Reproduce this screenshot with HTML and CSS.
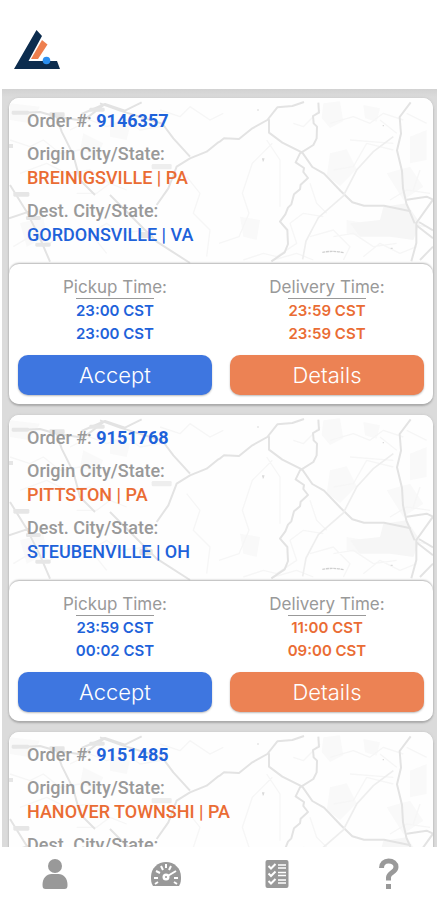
FILE: index.html
```html
<!DOCTYPE html>
<html lang="en">
<head>
<meta charset="utf-8">
<meta name="viewport" content="width=device-width, initial-scale=1">
<title>Available Orders</title>
<link rel="stylesheet" href="styles.css">
</head>
<body>
<svg class="defs" aria-hidden="true">
  <symbol id="map" viewBox="27 24 1272 498" preserveAspectRatio="xMidYMid slice">
    <g fill="#f9f9f9">
      <path d="M970 40l50-6 10 60-40 20-25-30zM990 190l50-12 30 60-50 50-40-30zM1160 250l70-20 40 60-60 40zM1040 390l60 10-10 40-50-10zM1230 140l50-20v90l-50 10zM1090 45l50 10-10 40-35-10zM720 380l60 10-10 60-40-10z"/>
      <path d="M30 40l90 10-30 50-60-10zM250 130l60 30-20 40-50-20zM60 400l70-20 10 60-60 30zM330 90l60 20-10 40-50-10z"/>
    </g>
    <path d="M1150 350l70-10 40 60-20 50-70-10-90 0-30-40 90-10z" fill="#f6f6f6"/>
    <g fill="none" stroke="#f6f6f6" stroke-width="4" stroke-linejoin="round">
      <path d="M30 150l60 20 40-20 50 40 60-10M60 250l80-30 60 30 70-10 60 40M40 470l50-30 60 20 50-40 80 20 40 50M210 120l60-30 50 20 60-20 40 30 60-10M380 300l-50-20-40 30-60 0M270 430l50-30 40 30 80-10"/>
      <path d="M480 60l60 20 30-30 60 40 40-20M560 260l40 50-20 60 50 50-10 80M657 460l60-20 30-70-20-60 30-90 60-60M800 150l40 60v140M730 510l60-20 40 10 60-40-20-60 40-30 60 10M820 510l70-20 50 20M930 280l20 60 30 30M960 60l-50 50-30-10M990 100l70-20 50 20 40-30 60 20M1000 240l60-10 40-70 80 20M1050 150l130 10M1140 90l50 40M1170 330l50-30 70 10M1000 440l60-10 60 40 70-10M1090 500l50-40 60 30 50-20M930 440l70-20 50 50-20 40M1220 70l60 30M1210 400l70 10M1240 300l20-60"/>
    </g>
    <g fill="none" stroke="#e3e3e3" stroke-width="6" stroke-linejoin="round">
      <path d="M40 70l80-4 50 14 80 12 65-50 60 20 50-25M315 42l-70 30M300 40l60 22 130 40M170 80l15 45 35 70 20 75 45 45M330 315l60 60 80 80 100 64M30 285l50 80 40 80 30 70M27 385l60-20M490 105l30 40 50 55M470 345l35-50 25-65 40-25 50-20 37-30"/>
      <path d="M657 157l15-12 45 2 40-32 45-25 30-38 45-4 35-12M807 88v40l40 30 60 30 30 43 35 20 50 52 35 34 35 10 60 0 80 17M955 38l2 30-18 10 2 22 10 10-1 35-10 20-40 25-13 27 25 17-2 12 14 18-22 20-2 14-18 15-8 30-10 10-8 20-16 22 22 25 2 42-10 25-40 27"/>
      <path d="M1232 37l-33 44 4 50-12 50 15 62 3 52 10 45 25 60M1220 329l60-9 19 9-50 70 0 60-15 55M1248 405l51 40M1257 396l42 25M1260 510l39-40"/>
    </g>
    <path d="M1180 140l-60 45-50 55-40 78-75 65-37 70-10 55" fill="none" stroke="#eee" stroke-width="5"/>
    <g fill="#e6e6e6">
      <rect x="35" y="62" width="52" height="12" rx="4"/><rect x="148" y="67" width="46" height="14" rx="4"/><rect x="268" y="53" width="46" height="12" rx="4"/><rect x="40" y="306" width="48" height="14" rx="4"/><rect x="78" y="378" width="44" height="12" rx="4"/><rect x="106" y="458" width="46" height="12" rx="4"/><rect x="418" y="426" width="40" height="18" rx="4"/><rect x="27" y="162" width="12" height="12"/>
    </g>
    <rect x="455" y="222" width="60" height="16" rx="4" fill="#eee"/>
    <path d="M967 487q32-6 65 1" fill="none" stroke="#cfcfcf" stroke-width="4" stroke-dasharray="9 2"/>
    <path d="M772 60h4M786 207h5l-2 7M1148 107h4M1172 475h6" stroke="#dadada" stroke-width="4" fill="none"/>
  </symbol>
</svg>

<header class="topbar">
  <svg class="logo" viewBox="0 0 46 40" role="img" aria-label="Company logo">
    <path d="M22.500 0L28 6 14.500 31H43L46 39H0z" fill="#0c2c4e"/>
    <path d="M28 10L33.500 14.500 24 29H17z" fill="#ee7f4e"/>
    <circle cx="32.500" cy="30.500" r="3.800" fill="#2b8ff0"/>
  </svg>
</header>

<main class="orders">
  <article class="card">
    <div class="route">
      <svg class="map" aria-hidden="true"><use href="#map"/></svg>
      <p>Order #: <strong class="blue">9146357</strong></p>
      <p>Origin City/State:<strong class="place orange">BREINIGSVILLE | PA</strong></p>
      <p>Dest. City/State:<strong class="place blue">GORDONSVILLE | VA</strong></p>
    </div>
    <div class="schedule">
      <section class="slot">
        <h2>Pickup Time:</h2>
        <p class="times blue">23:00 CST<br>23:00 CST</p>
        <button class="btn accept" type="button">Accept</button>
      </section>
      <section class="slot">
        <h2>Delivery Time:</h2>
        <p class="times orange">23:59 CST<br>23:59 CST</p>
        <button class="btn details" type="button">Details</button>
      </section>
    </div>
  </article>

  <article class="card">
    <div class="route">
      <svg class="map" aria-hidden="true"><use href="#map"/></svg>
      <p>Order #: <strong class="blue">9151768</strong></p>
      <p>Origin City/State:<strong class="place orange">PITTSTON | PA</strong></p>
      <p>Dest. City/State:<strong class="place blue">STEUBENVILLE | OH</strong></p>
    </div>
    <div class="schedule">
      <section class="slot">
        <h2>Pickup Time:</h2>
        <p class="times blue">23:59 CST<br>00:02 CST</p>
        <button class="btn accept" type="button">Accept</button>
      </section>
      <section class="slot">
        <h2>Delivery Time:</h2>
        <p class="times orange">11:00 CST<br>09:00 CST</p>
        <button class="btn details" type="button">Details</button>
      </section>
    </div>
  </article>

  <article class="card">
    <div class="route">
      <svg class="map" aria-hidden="true"><use href="#map"/></svg>
      <p>Order #: <strong class="blue">9151485</strong></p>
      <p>Origin City/State:<strong class="place orange">HANOVER TOWNSHI | PA</strong></p>
      <p>Dest. City/State:</p>
    </div>
  </article>
</main>

<nav class="tabs" aria-label="Main">
  <a href="#profile" aria-label="Profile">
    <svg viewBox="0 0 32 32"><circle cx="16" cy="8" r="7"/><path d="M3.500 27c0-7 4-11 9-11h7c5 0 9 4 9 11 0 3-1 4-3 4h-19c-2 0-3-1-3-4z"/></svg>
  </a>
  <a href="#dashboard" aria-label="Dashboard">
    <svg viewBox="0 0 32 32"><path d="M3 28C1 25 1 22 1 19 1 10 8 4 16 4s15 6 15 15c0 3 0 6-2 9z"/><g stroke="#fff" stroke-width="2" fill="none"><path d="M4 20h4M5 26l3-2M6 13l4 2M11 8l2 4M16 6v4M21 8l-2 4M28 20h-4M27 26l-3-2M16 19l10-6"/></g><circle cx="16" cy="19" r="3.500" fill="#fff"/><circle cx="16" cy="19" r="1"/></svg>
  </a>
  <a href="#checklist" aria-label="Checklist">
    <svg viewBox="0 0 32 32"><rect x="4.500" y="2" width="23" height="28" rx="2"/><g stroke="#fff" fill="none"><path d="M7.500 8l2.500 2.500L14.500 6M7.500 15.500L10 18l4.500-4.500M7.500 23l2.500 2.500L14.500 21" stroke-width="2"/><path d="M17 7h8M17 10h8M17 14.500h8M17 17.500h8M17 22h8M17 25h8" stroke-width="1.500"/></g></svg>
  </a>
  <a href="#help" aria-label="Help">
    <svg viewBox="0 0 32 32"><path d="M9.500 10c0-4.500 3-7 7-7 4.500 0 7.500 2.500 7.500 6 0 5.500-7.500 5.500-7.500 10.500v3" fill="none" stroke="#999" stroke-width="5"/><rect x="14" y="26" width="5" height="5"/></svg>
  </a>
</nav>
</body>
</html>
```
FILE: styles.css
```css
* { box-sizing: border-box; }

body {
  margin: 0;
  height: 100vh;
  display: flex;
  flex-direction: column;
  background: #fff;
  color: #999;
  font-family: Roboto, sans-serif;
}

p, h2 { margin: 0; }

.defs { display: none; }

.topbar {
  flex: none;
  height: 89px;
  padding: 30px 14px 0;
}

.logo {
  display: block;
  width: 46px;
  height: 40px;
}

.orders {
  flex: 1;
  min-height: 0;
  overflow: hidden;
  margin: 0 2px;
  padding: 9px 4px 0 7px;
  background: linear-gradient(#d2d2d2, #dbdbdb 8px);
}

.card {
  margin-bottom: 11px;
  border-radius: 10px;
  background: #fff;
  box-shadow: 0 2px 2px #aaa, 0 0 3px #c4c4c4;
}

.route {
  position: relative;
  display: flex;
  flex-direction: column;
  gap: 9px;
  height: 176px;
  padding: 11px 18px 0;
  border-radius: 10px;
  overflow: hidden;
  background: #fefefe;
  font-size: 18px;
  line-height: 24px;
  font-weight: 500;
}

.route p { position: relative; }

.map {
  position: absolute;
  top: 0;
  left: 0;
  width: 100%;
  height: 166px;
}

.place { display: block; font-weight: 500; }

.blue { color: #1e62da; }
.orange { color: #ea6c34; }

.schedule {
  position: relative;
  display: grid;
  grid-template-columns: 1fr 1fr;
  gap: 18px;
  margin-top: -10px;
  padding: 12px 9px 9px;
  border-radius: 10px;
  background: #fff;
  box-shadow: 0 -1px 2px #b4b4b4;
  font-family: Inter, sans-serif;
}

.slot {
  display: flex;
  flex-direction: column;
  align-items: center;
}

.slot h2 {
  font-size: 17px;
  line-height: 22px;
  font-weight: 400;
}

.times {
  border-top: 1px solid #999;
  font-size: 15px;
  line-height: 23px;
  font-weight: 600;
  text-align: center;
}

.btn {
  width: 100%;
  height: 40px;
  margin-top: 10px;
  padding: 0;
  border: 0;
  border-radius: 10px;
  color: #fff;
  font-family: Inter, sans-serif;
  font-size: 22px;
  font-weight: 300;
  box-shadow: 0 1px 2px #bbb;
}

.accept { background: #3e76e0; }
.details { background: #ec8254; }

.tabs {
  flex: none;
  display: flex;
  justify-content: space-between;
  height: 53px;
  padding: 11px 35px 0 39px;
  background: #fff;
}

.tabs svg {
  display: block;
  width: 32px;
  height: 32px;
  fill: #999;
}
```
